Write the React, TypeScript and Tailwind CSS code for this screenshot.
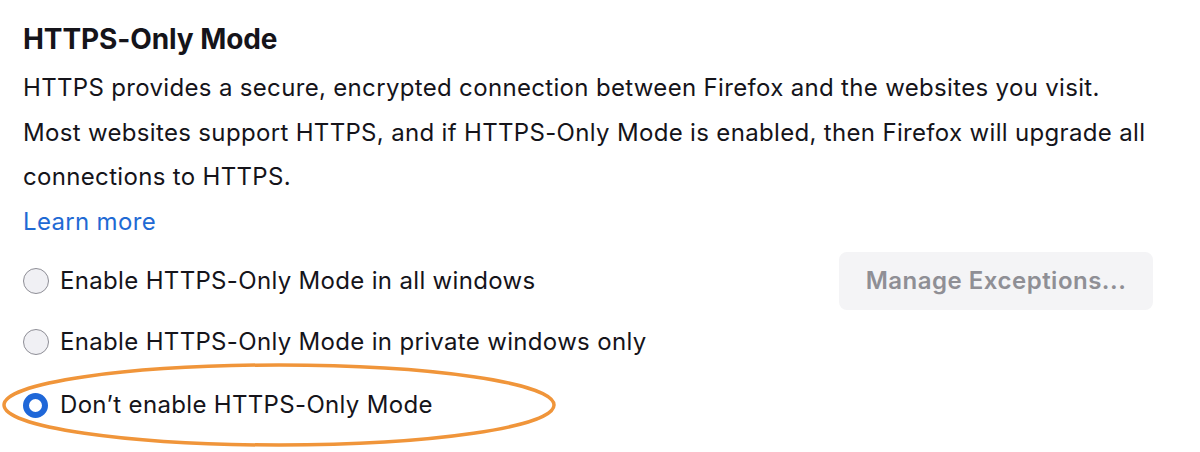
import React from 'react';

const font = { fontFamily: 'Inter, "Noto Sans", sans-serif' };

function Radio({ checked }: { checked?: boolean }) {
  if (checked) {
    return (
      <span className="w-[25px] h-[25px] rounded-full border-[6px] border-[#1f67d8] bg-white shrink-0" />
    );
  }
  return (
    <span className="w-[26px] h-[26px] rounded-full border-[1.5px] border-[#8e8e96] bg-[#f0f0f4] shrink-0" />
  );
}

export default function App() {
  return (
    <div className="relative w-[1200px] h-[452px] bg-white text-[#15141a] overflow-hidden" style={font}>
      <div className="pl-[23px] pr-[40px] pt-[18px]">
        <h1 className="text-[28px] font-bold leading-[42px] tracking-[-0.1px]">HTTPS-Only Mode</h1>
        <p className="mt-[6px] text-[24px] leading-[44.5px] tracking-[0.33px]">
          HTTPS provides a secure, encrypted connection between Firefox and the websites you visit.
          <br />
          Most websites support HTTPS, and if HTTPS-Only Mode is enabled, then Firefox will upgrade all
          <br />
          connections to HTTPS.
        </p>
        <a className="block text-[24px] leading-[44.5px] text-[#1f6ad4] tracking-[0.33px]">Learn more</a>

        <div className="mt-[8px] h-[58px] flex items-center justify-between">
          <label className="flex items-center gap-[11px] text-[24px] tracking-[0.33px]">
            <Radio />
            <span>Enable HTTPS-Only Mode in all windows</span>
          </label>
          <button className="mr-[7px] w-[314px] h-[58px] rounded-[8px] bg-[#f4f4f6] text-[#8f8f95] text-[24px] font-semibold tracking-[0.5px]">
            Manage Exceptions...
          </button>
        </div>

        <label className="mt-[10px] h-[44px] flex items-center gap-[11px] text-[24px] tracking-[0.33px]">
          <Radio />
          <span>Enable HTTPS-Only Mode in private windows only</span>
        </label>

        <label className="mt-[19px] h-[44px] flex items-center gap-[12px] text-[24px] tracking-[0.33px]">
          <Radio checked />
          <span>Don’t enable HTTPS-Only Mode</span>
        </label>
      </div>

      <svg className="absolute left-0 top-[360px] pointer-events-none" width="570" height="92" viewBox="0 0 570 92">
        <ellipse cx="279" cy="45" rx="275" ry="40" fill="none" stroke="#f0953a" strokeWidth="3.5" />
      </svg>
    </div>
  );
}
